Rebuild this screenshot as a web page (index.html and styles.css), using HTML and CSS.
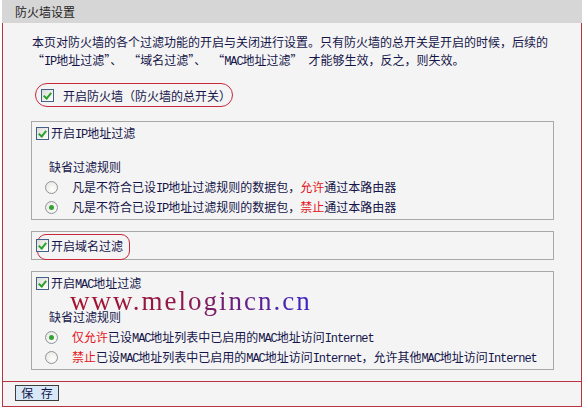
FILE: index.html
```html
<!DOCTYPE html>
<html lang="zh-CN">
<head>
    <meta charset="UTF-8">
    <title>防火墙设置</title>
    <link rel="stylesheet" href="styles.css">
</head>
<body>
    <div id="frame">
        <div class="title">防火墙设置</div>

        <div class="panel">
            <p class="desc">本页对防火墙的各个过滤功能的开启与关闭进行设置。只有防火墙的总开关是开启的时候，后续的<br>“<span class="en">IP</span>地址过滤”、&ensp;“域名过滤”、&ensp;“<span class="en">MAC</span>地址过滤”&ensp;才能够生效，反之，则失效。</p>

            <div class="fw-row">
                <span class="ring fw-ring"></span>
                <span class="chk on"></span>
                <span class="fw-label">开启防火墙（防火墙的总开关）</span>
            </div>

            <div class="box">
                <div class="chk-row"><span class="chk on"></span><span>开启<span class="en">IP</span>地址过滤</span></div>
                <div class="rule">缺省过滤规则</div>
                <div class="radios">
                    <div class="radio-row"><span class="radio"></span><span>凡是不符合已设<span class="en">IP</span>地址过滤规则的数据包，<em>允许</em>通过本路由器</span></div>
                    <div class="radio-row"><span class="radio on"></span><span>凡是不符合已设<span class="en">IP</span>地址过滤规则的数据包，<em>禁止</em>通过本路由器</span></div>
                </div>
            </div>

            <div class="box box-short">
                <div class="chk-row">
                    <span class="ring dom-ring"></span>
                    <span class="chk on"></span><span>开启域名过滤</span>
                </div>
            </div>

            <div class="box mac-box">
                <div class="chk-row"><span class="chk on"></span><span>开启<span class="en">MAC</span>地址过滤</span></div>
                <div class="rule">缺省过滤规则</div>
                <div class="radios">
                    <div class="radio-row"><span class="radio on"></span><span><em>仅允许</em>已设<span class="en">MAC</span>地址列表中已启用的<span class="en">MAC</span>地址访问<span class="en">Internet</span></span></div>
                    <div class="radio-row"><span class="radio"></span><span><em>禁止</em>已设<span class="en">MAC</span>地址列表中已启用的<span class="en">MAC</span>地址访问<span class="en">Internet</span>，允许其他<span class="en">MAC</span>地址访问<span class="en">Internet</span></span></div>
                </div>
                <div class="watermark">www.melogincn.cn</div>
            </div>
        </div>

        <div class="foot">
            <button type="button" class="save">保 存</button>
        </div>
    </div>
</body>
</html>
```

FILE: styles.css
```css
* {
    margin: 0;
    padding: 0;
    box-sizing: border-box;
}

body {
    font-family: "Noto Sans CJK SC", "Liberation Sans", sans-serif;
    font-size: 12px;
    color: #14144a;
    background-color: #ffffff;
}

#frame {
    width: 580px;
    margin-left: 2px;
}

.title {
    height: 23px;
    line-height: 23px;
    padding-left: 13px;
    background-color: #d6d6d6;
    color: #1e1e1e;
}

.panel {
    background-color: #f4f4f4;
    border-left: 1px solid #b83440;
    border-right: 1px solid #b83440;
    border-bottom: 1px solid #b83440;
    padding: 10px 0 11px 28px;
}

.desc {
    line-height: 18px;
    padding-left: 1px;
}

/* latin words in the narrow monospace look of the router ui */
.en {
    font-family: "Liberation Mono", monospace;
    font-size: 12px;
    letter-spacing: -1.1px;
}

.fw-row {
    position: relative;
    display: flex;
    align-items: center;
    height: 24px;
    margin-top: 12px;
    padding-left: 10px;
}

.fw-label {
    margin-left: 9px;
}

.ring {
    position: absolute;
    border: 1px solid #c8283c;
}

.fw-ring {
    left: 4px;
    top: 0;
    width: 198px;
    height: 24px;
    border-radius: 12px;
}

.dom-ring {
    left: 1px;
    top: -2px;
    width: 93px;
    height: 26px;
    border-radius: 9px;
}

/* checkbox drawn by css */
.chk {
    display: inline-block;
    width: 13px;
    height: 13px;
    border: 1px solid #43608a;
    background: linear-gradient(135deg, #dcdcd6, #ffffff);
    position: relative;
    flex: none;
}

.chk.on::after {
    content: "";
    position: absolute;
    left: 3px;
    top: 1px;
    width: 3px;
    height: 6px;
    border-right: 2px solid #2aa12a;
    border-bottom: 2px solid #2aa12a;
    transform: rotate(40deg);
}

.box {
    position: relative;
    width: 523px;
    margin-top: 14px;
    border: 1px solid #a8a8a8;
    padding: 2px 0 2px 4px;
}

.box + .box {
    margin-top: 11px;
}

.box-short {
    height: 29px;
    padding-top: 4px;
}

.chk-row {
    position: relative;
    display: flex;
    align-items: center;
    gap: 2px;
    height: 18px;
}

.rule {
    height: 18px;
    line-height: 18px;
    margin-top: 16px;
    padding-left: 13px;
}

.radios {
    margin-top: 1px;
}

.radio-row {
    display: flex;
    align-items: center;
    height: 20px;
    padding-left: 9px;
    white-space: nowrap;
}

.radio {
    display: inline-block;
    width: 13px;
    height: 13px;
    border: 1px solid #8c949c;
    border-radius: 50%;
    background: radial-gradient(circle at 60% 65%, #ffffff, #e2e2dc);
    margin-right: 14px;
    position: relative;
    flex: none;
}

.radio.on::after {
    content: "";
    position: absolute;
    left: 3px;
    top: 3px;
    width: 5px;
    height: 5px;
    border-radius: 50%;
    background-color: #35a035;
}

em {
    font-style: normal;
    color: #e4141c;
}

.watermark {
    position: absolute;
    left: 38px;
    top: 18px;
    font-family: "Liberation Serif", serif;
    font-size: 27px;
    line-height: 22px;
    letter-spacing: 2px;
    background: linear-gradient(90deg, #a8102c 0%, #901a48 45%, #3a26c8 100%);
    -webkit-background-clip: text;
    background-clip: text;
    color: transparent;
    padding-bottom: 6px;
}

.foot {
    height: 25px;
    background-color: #f4f4f4;
    border-left: 1px solid #b83440;
    border-right: 1px solid #b83440;
    border-bottom: 1px solid #b83440;
    padding: 2px 0 0 12px;
}

.save {
    width: 44px;
    height: 16px;
    font-family: "Noto Sans CJK SC", sans-serif;
    font-size: 12px;
    line-height: 13px;
    word-spacing: 5px;
    color: #14144a;
    background-color: #d8e8f6;
    border: 1px solid #3c3c3c;
}
```
